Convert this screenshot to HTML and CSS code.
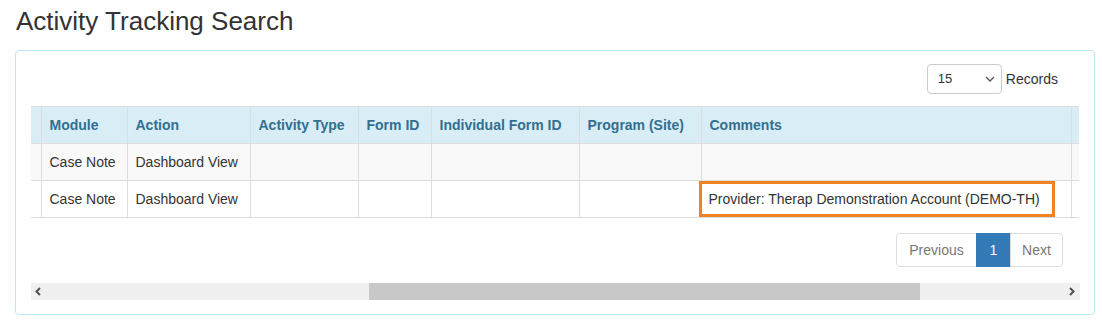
FILE: index.html
```html
<!DOCTYPE html>
<html>
<head>
<meta charset="utf-8">
<link rel="stylesheet" href="styles.css">
</head>
<body>
<div class="page">
  <h1 class="title">Activity Tracking Search</h1>
  <div class="panel">
    <div class="panel-body">
      <div class="toolbar">
        <div class="select">
          <span class="select-value">15</span>
          <svg class="select-caret" width="10" height="6" viewBox="0 0 10 6"><polyline points="1,1 5,5 9,1" fill="none" stroke="#555" stroke-width="1.3"/></svg>
        </div>
        <span class="records">Records</span>
      </div>
      <div class="scroll">
        <table class="grid">
          <colgroup>
            <col class="c0"><col class="c1"><col class="c2"><col class="c3"><col class="c4"><col class="c5"><col class="c6"><col class="c7"><col class="c8">
          </colgroup>
          <thead>
            <tr>
              <th class="first"></th>
              <th>Module</th>
              <th>Action</th>
              <th>Activity Type</th>
              <th>Form ID</th>
              <th>Individual Form ID</th>
              <th>Program (Site)</th>
              <th>Comments</th>
              <th></th>
            </tr>
          </thead>
          <tbody>
            <tr class="odd">
              <td class="first"></td>
              <td>Case Note</td>
              <td>Dashboard View</td>
              <td></td><td></td><td></td><td></td><td></td><td></td>
            </tr>
            <tr>
              <td class="first"></td>
              <td>Case Note</td>
              <td>Dashboard View</td>
              <td></td><td></td><td></td><td></td>
              <td><span class="mark">Provider: Therap Demonstration Account (DEMO-TH)</span></td>
              <td></td>
            </tr>
          </tbody>
        </table>
        <div class="pager-row">
          <ul class="pager">
            <li class="pg prev disabled">Previous</li>
            <li class="pg num active">1</li>
            <li class="pg next disabled">Next</li>
          </ul>
        </div>
      </div>
      <div class="scrollbar">
        <svg class="arrow" width="6" height="9" viewBox="0 0 6 9"><polyline points="5,1 1.5,4.5 5,8" fill="none" stroke="#505050" stroke-width="2"/></svg>
        <div class="thumb"></div>
        <svg class="arrow" width="6" height="9" viewBox="0 0 6 9"><polyline points="1,1 4.5,4.5 1,8" fill="none" stroke="#505050" stroke-width="2"/></svg>
      </div>
    </div>
  </div>
</div>
</body>
</html>
```
FILE: styles.css
```css
html, body {
  margin: 0;
  padding: 0;
  background: #fff;
}
body {
  font-family: "Liberation Sans", Arial, sans-serif;
  font-size: 14px;
  line-height: 20px;
  color: #333;
}
.page {
  padding: 0 7px 0 15px;
}
.title {
  margin: 7px 0 14px 1px;
  font-size: 26px;
  line-height: 29px;
  font-weight: normal;
  color: #333;
}
.panel {
  border: 1px solid #bce8f1;
  border-radius: 4px;
  width: 1078px;
}
.panel-body {
  padding: 13px 15px 14px 15px;
}
.toolbar {
  display: flex;
  justify-content: flex-end;
  align-items: center;
  padding-right: 21px;
  margin-bottom: 12px;
}
.select {
  height: 28px;
  border: 1px solid #ccc;
  border-radius: 4px;
  display: flex;
  align-items: center;
  justify-content: space-between;
  padding: 0 6px 0 10px;
  box-sizing: content-box;
  width: 57px;
}
.select-value {
  font-size: 13px;
  color: #333;
}
.select-caret {
  display: block;
}
.records {
  margin-left: 4px;
  color: #333;
}
.scroll {
  width: 1048px;
  overflow: hidden;
}
.grid {
  border-collapse: collapse;
  table-layout: fixed;
  width: 1140px;
}
.c0 { width: 10px; }
.c1 { width: 86px; }
.c2 { width: 123px; }
.c3 { width: 108px; }
.c4 { width: 73px; }
.c5 { width: 148px; }
.c6 { width: 122px; }
.c7 { width: 370px; }
.c8 { width: 100px; }
.grid th, .grid td {
  border: 1px solid #ddd;
  padding: 8px;
  text-align: left;
  white-space: nowrap;
  overflow: visible;
  height: 20px;
}
.grid th {
  background: #d9edf7;
  color: #31708f;
  font-weight: bold;
}
.grid .first {
  border-left: none;
  padding: 8px 0;
}
.grid tr.odd td {
  background: #f9f9f9;
}
.mark {
  outline: 3px solid #f0821f;
  outline-offset: 7px;
  margin-left: -1px;
  padding-right: 5px;
}
.pager-row {
  display: flex;
  justify-content: flex-end;
  padding-right: 16px;
  margin-top: 15px;
}
.pager {
  display: flex;
  list-style: none;
  margin: 0;
  padding: 0;
}
.pg {
  padding: 6px 0;
  line-height: 20px;
  border: 1px solid #ddd;
  margin-left: -1px;
  color: #777;
  background: #fff;
  text-align: center;
  box-sizing: border-box;
}
.pg.prev { width: 81px; }
.pg.num { width: 35px; }
.pg.next { width: 53px; }
.pg:first-child {
  border-radius: 4px 0 0 4px;
  margin-left: 0;
}
.pg:last-child {
  border-radius: 0 4px 4px 0;
}
.pg.active {
  background: #337ab7;
  border-color: #337ab7;
  color: #fff;
}
.scrollbar {
  margin-top: 16px;
  height: 17px;
  width: 1049px;
  background: #f0f0f0;
  display: flex;
  align-items: center;
}
.arrow {
  display: block;
  margin: 0 4px;
}
.thumb {
  margin-left: 324px;
  width: 551px;
  height: 17px;
  background: #c8c8c8;
  margin-right: auto;
}
.arrow:last-child {
  margin-right: 5px;
}
```
